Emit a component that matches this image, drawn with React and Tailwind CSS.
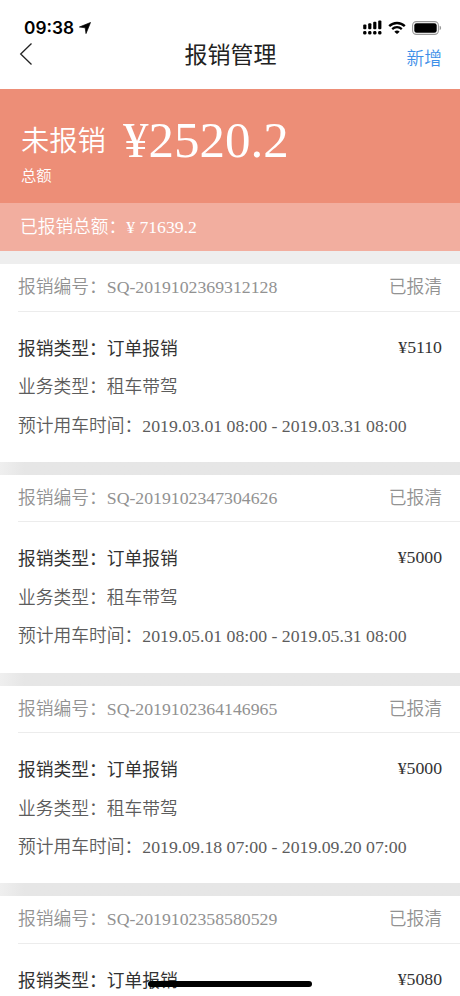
import React from "react";

const claims = [
  { code: "SQ-2019102369312128", amount: "¥5110", period: "2019.03.01 08:00 - 2019.03.31 08:00" },
  { code: "SQ-2019102347304626", amount: "¥5000", period: "2019.05.01 08:00 - 2019.05.31 08:00" },
  { code: "SQ-2019102364146965", amount: "¥5000", period: "2019.09.18 07:00 - 2019.09.20 07:00" },
  { code: "SQ-2019102358580529", amount: "¥5080" },
];

function StatusIcons() {
  return (
    <div className="flex items-center">
      <svg className="mr-px h-[15px] w-[19px]" viewBox="0 0 19 15">
        {[0, 1, 2, 3].map((i) => (
          <g key={i}>
            <rect x={0.2 + i * 5} y={4.6 - i * 1.4} width="3.2" height={4.6 + i * 1.4} rx="1" />
            <rect x={0.2 + i * 5} y="11" width="3.2" height="3.6" rx="1.3" />
          </g>
        ))}
      </svg>
      <svg className="ml-[5px] h-[13px] w-[18px]" viewBox="0 0 18 13">
        <path d="M1.2 5.1a11.2 11.2 0 0 1 15.6 0" fill="none" stroke="#000" strokeWidth="2.4" />
        <path d="M4.2 8.1a7 7 0 0 1 9.6 0" fill="none" stroke="#000" strokeWidth="2.2" />
        <path d="M6.3 10.8a4 4 0 0 1 5.4 0L9 13z" />
      </svg>
      <svg className="ml-[6px] h-[14px] w-[30px]" viewBox="0 0 30 14">
        <rect x="0.6" y="0.6" width="25.8" height="12.8" rx="3.8" fill="none" stroke="#999" strokeWidth="1.1" />
        <rect x="2.3" y="2.2" width="22.4" height="9.6" rx="2.3" />
        <path d="M27.6 4.8c2 .6 2 3.8 0 4.4z" fill="#999" />
      </svg>
    </div>
  );
}

function Header() {
  return (
    <header className="h-[89px] bg-white">
      <div className="flex h-[40px] items-center justify-between pt-[15px] pl-6 pr-[18px]">
        <div className="flex items-center">
          <span className="font-['Inter',sans-serif] text-[17.3px] leading-6 font-semibold text-black">09:38</span>
          <svg className="ml-[5px] h-[12px] w-[12px]" viewBox="0 0 12 12">
            <path d="M11.5.5 7 11.6 6.2 5.8.4 5z" stroke="#000" strokeWidth=".7" strokeLinejoin="round" />
          </svg>
        </div>
        <StatusIcons />
      </div>
      <div className="grid h-[30px] grid-cols-3 items-center pl-[19px] pr-[18px]">
        <svg className="mb-[4px] h-[24px] w-[14px]" viewBox="0 0 14 24" fill="none" stroke="#222" strokeWidth="1.3">
          <path d="M12.5 1.5 1.7 12l10.8 10.5" />
        </svg>
        <h1 className="text-center text-[23px] leading-[30px] whitespace-nowrap text-[#222]">报销管理</h1>
        <button className="mt-[7px] text-right text-[17.7px] leading-6 font-[350] text-[#3e8fe8]">新增</button>
      </div>
    </header>
  );
}

function Summary() {
  return (
    <section className="font-[350] text-white">
      <div className="h-[114px] bg-[#ed8e77] pt-[23px] pl-[21px]">
        <div className="flex h-[55px] items-center">
          <span className="mt-[6px] text-[28.3px]">未报销</span>
          <span className="ml-[17px] mt-[2px] text-[51px] leading-[55px]">¥2520.2</span>
        </div>
        <p className="text-[15.3px] leading-[18px]">总额</p>
      </div>
      <div className="h-[48px] bg-[#f2ae9f] pl-5 text-[17.7px] leading-[48px]">已报销总额：¥ 71639.2</div>
    </section>
  );
}

function ClaimCard({ code, amount, period }) {
  return (
    <article className="mb-[13px] h-[197.8px] bg-white text-[17.75px] font-[350] text-[#5c5c5c]">
      <div className="ml-[18px] flex h-[47.5px] items-center justify-between border-b border-[#ececec] pr-[18px] text-[#929292]">
        <span>报销编号：{code}</span>
        <span>已报清</span>
      </div>
      <div className="px-[18px] pt-[18px] leading-[38.5px]">
        <div className="flex justify-between font-normal text-[#333]">
          <span>报销类型：订单报销</span>
          <span className="-mt-[2px]">{amount}</span>
        </div>
        {period && (
          <>
            <p>业务类型：租车带驾</p>
            <p>预计用车时间：{period}</p>
          </>
        )}
      </div>
    </article>
  );
}

export default function App() {
  return (
    <main className="relative h-[996px] w-[460px] overflow-hidden bg-[#eee] font-['Liberation_Serif','Noto_Sans_CJK_SC',serif]">
      <Header />
      <Summary />
      <div className="mt-[13px] bg-linear-to-r from-[#efefef] to-[#e6e6e6] to-[24px]">
        {claims.map((claim) => (
          <ClaimCard key={claim.code} {...claim} />
        ))}
      </div>
      <div className="absolute bottom-[9px] left-[148px] h-[6px] w-[164px] rounded-full bg-black" />
    </main>
  );
}
